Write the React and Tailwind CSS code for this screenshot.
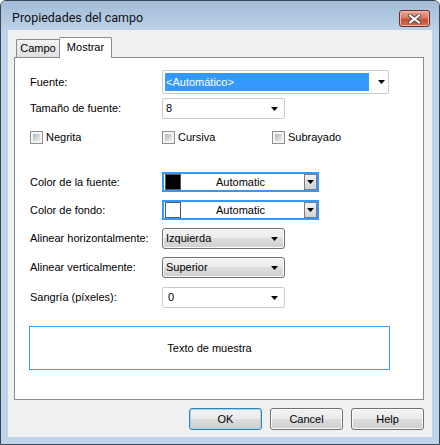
import React from "react";

// small black drop-down triangle used by every combo
function Arrow() {
    return (
        <svg width="7" height="4" viewBox="0 0 7 4">
            <path d="M0 0H7L3.5 4Z" fill="#000" />
        </svg>
    );
}

function Label({children}) {
    return <div className="w-[132px] shrink-0">{children}</div>;
}

function EditCombo({value, width}) {
    return (
        <div className={"h-full flex items-center bg-white border border-[#c7cbd2] rounded-[2px] pl-[3px] pr-[6px] " + width}>
            <span className="flex-1">{value}</span>
            <Arrow />
        </div>
    );
}

function ListCombo({value}) {
    return (
        <div className="h-full w-[123px] flex items-center border border-[#707070] rounded-[3px] pl-[3px] pr-[6px] shadow-[inset_0_0_0_1px_#fbfbfb] bg-[linear-gradient(to_bottom,#f2f2f2_0%,#ebebeb_50%,#dddddd_50%,#cfcfcf_100%)]">
            <span className="flex-1">{value}</span>
            <Arrow />
        </div>
    );
}

function ColorCombo({swatch}) {
    return (
        <div className="h-full w-[157px] flex items-center bg-white border-2 border-[#3399ff]">
            <div className={"ml-px w-[16px] h-[16px] border border-[#5a5a5a] " + swatch} />
            <span className="flex-1 text-center pr-[4px]">Automatic</span>
            <div className="w-[13px] h-[16px] flex items-center justify-center border border-[#7c7c7c] bg-gradient-to-b from-[#f4f4f4] to-[#d2d2d2]">
                <Arrow />
            </div>
        </div>
    );
}

function Check({label, width}) {
    return (
        <div className={"flex items-center h-full " + width}>
            <div className="w-[13px] h-[13px] border border-[#8e8f8f] bg-[#f4f4f4] p-[2px]">
                <div className="w-full h-full bg-gradient-to-br from-[#b3b8be] to-[#efefef]" />
            </div>
            <span className="ml-[3px]">{label}</span>
        </div>
    );
}

function Button({children, primary}) {
    const border = primary
        ? "border-[#3c7fb1] shadow-[inset_0_0_0_1px_#9ad7f7]"
        : "border-[#707070] shadow-[inset_0_0_0_1px_#fbfbfb]";
    return (
        <button type="button"
                className={"w-[73px] h-[22px] border rounded-[3px] flex items-center justify-center bg-[linear-gradient(to_bottom,#f2f2f2_0%,#ebebeb_50%,#dddddd_50%,#cfcfcf_100%)] " + border}>
            {children}
        </button>
    );
}

export default function App() {
    return (
        <div className="w-[440px] h-[445px] flex flex-col border border-[#3a4656] rounded-t-[6px] overflow-hidden bg-[#bed4eb] font-['Liberation_Sans',Arial,sans-serif] text-[11px] text-black">
            {/* title bar */}
            <div className="h-[29px] shrink-0 flex items-center justify-between pt-[6px] pl-[11px] pr-[9px] bg-gradient-to-b from-[#a3bcd7] to-[#bcd2ea]">
                <span className="font-['Roboto',sans-serif] text-[12.5px] text-[#111]">Propiedades del campo</span>
                <div className="w-[31px] h-[17px] rounded-[3px] border border-[#6e2b22] flex items-center justify-center bg-[linear-gradient(to_bottom,#e9a99b_0%,#d77b68_45%,#c7503a_55%,#d26a52_100%)] shadow-[inset_0_0_0_1px_#f0b8aa]">
                    <svg width="13" height="10" viewBox="0 0 13 10">
                        <path d="M2 1.5L11 8.5M11 1.5L2 8.5" stroke="#4b4b4b" strokeWidth="4" strokeLinecap="square" />
                        <path d="M2 1.5L11 8.5M11 1.5L2 8.5" stroke="#fff" strokeWidth="2" strokeLinecap="square" />
                    </svg>
                </div>
            </div>

            {/* client area */}
            <div className="flex-1 mx-[7px] mb-[7px] bg-[#f0f0f0] flex flex-col pt-[7px] pl-[6px] pr-[8px]">
                {/* tabs */}
                <div className="h-[20px] flex items-end pl-[2px]">
                    <div className="w-[43px] h-[18px] border border-r-0 border-b-0 border-[#898c95] rounded-tl-[2px] flex items-center justify-center bg-gradient-to-b from-[#f3f3f3] to-[#e0e0e0]">
                        Campo
                    </div>
                    <div className="w-[53px] h-[21px] -mb-px relative z-10 border border-b-0 border-[#898c95] rounded-t-[2px] bg-white flex items-center justify-center pb-[2px]">
                        Mostrar
                    </div>
                </div>

                {/* page */}
                <div className="h-[343px] border border-[#898c95] bg-white flex flex-col pl-[15px]">
                    <div className="mt-[12px] h-[24px] flex items-center">
                        <Label>Fuente:</Label>
                        <div className="h-full w-[227px] flex items-center bg-white border border-[#c7cbd2] rounded-[2px] pl-[2px] pr-[3px]">
                            <div className="w-[204px] h-[18px] bg-[#3399ff] text-white flex items-center pl-px">
                                &lt;Automático&gt;
                            </div>
                            <div className="flex-1 flex justify-end">
                                <Arrow />
                            </div>
                        </div>
                    </div>

                    <div className="mt-[4px] h-[21px] flex items-center">
                        <Label>Tamaño de fuente:</Label>
                        <EditCombo value="8" width="w-[123px]" />
                    </div>

                    <div className="mt-[12px] h-[13px] flex items-center">
                        <Check label="Negrita" width="w-[132px]" />
                        <Check label="Cursiva" width="w-[110px]" />
                        <Check label="Subrayado" width="" />
                    </div>

                    <div className="mt-[28px] h-[20px] flex items-center">
                        <Label>Color de la fuente:</Label>
                        <ColorCombo swatch="bg-black" />
                    </div>

                    <div className="mt-[8px] h-[20px] flex items-center">
                        <Label>Color de fondo:</Label>
                        <ColorCombo swatch="bg-white" />
                    </div>

                    <div className="mt-[8px] h-[21px] flex items-center">
                        <Label>Alinear horizontalmente:</Label>
                        <ListCombo value="Izquierda" />
                    </div>

                    <div className="mt-[8px] h-[21px] flex items-center">
                        <Label>Alinear verticalmente:</Label>
                        <ListCombo value="Superior" />
                    </div>

                    <div className="mt-[9px] h-[21px] flex items-center">
                        <Label>Sangría (píxeles):</Label>
                        <div className="h-full w-[123px] flex items-center bg-white border border-[#c7cbd2] rounded-[2px] pl-[5px] pr-[6px]">
                            <span className="flex-1">0</span>
                            <Arrow />
                        </div>
                    </div>

                    <div className="mt-[18px] -ml-px h-[44px] w-[361px] border border-[#3d9cf5] flex items-center justify-center">
                        Texto de muestra
                    </div>
                </div>

                {/* buttons */}
                <div className="mt-[8px] flex justify-end gap-[8px]">
                    <Button primary>OK</Button>
                    <Button>Cancel</Button>
                    <Button>Help</Button>
                </div>
            </div>
        </div>
    );
}
